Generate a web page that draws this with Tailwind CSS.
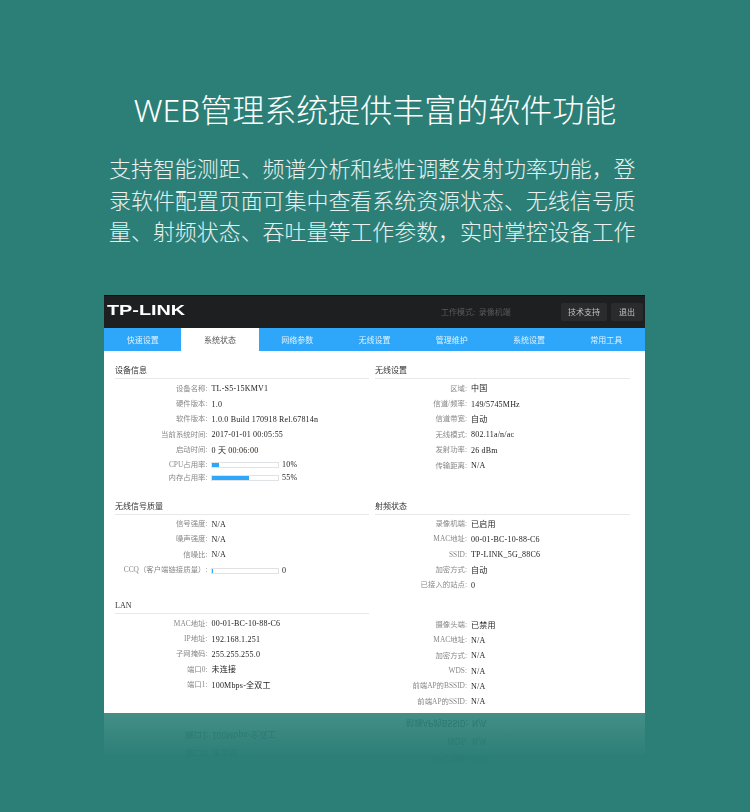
<!DOCTYPE html>
<html lang="zh-CN">
<head>
<meta charset="utf-8">
<script src="https://cdn.jsdelivr.net/npm/@tailwindcss/browser@4"></script>
</head>
<body class="m-0">
<div class="w-[750px] h-[812px] overflow-hidden bg-[#2c7f77] font-['Noto_Sans_CJK_SC','Noto_Sans',sans-serif]">
  <h1 class="pt-[88px] h-[146px] text-center text-[32px] leading-[44px] font-light text-white font-['Noto_Sans','Noto_Sans_CJK_SC',sans-serif] whitespace-nowrap">WEB管理系统提供丰富的软件功能</h1>
  <p class="ml-[109px] w-[532px] pt-[6px] h-[149px] text-[21.95px] leading-[31.7px] font-light text-white/90 whitespace-nowrap">支持智能测距、频谱分析和线性调整发射功率功能，登<br>录软件配置页面可集中查看系统资源状态、无线信号质<br>量、射频状态、吞吐量等工作参数，实时掌控设备工作</p>

  <div class="relative ml-[104px] w-[541px] h-[418px] bg-white blur-[0.35px] font-['Liberation_Serif','Noto_Sans_CJK_SC',serif] text-[8px] text-[#222]">
    <div class="flex items-center h-[33px] bg-[#1e1f21] border-t border-[#0c0c0c] pl-[3px] pr-[2px]">
      <div class="w-[334px] -mt-[5px] font-['Liberation_Sans',sans-serif] font-bold text-[15px] leading-none text-white origin-left scale-x-[1.32] whitespace-nowrap">TP-LINK</div>
      <div class="w-[120px] -mt-[1px] text-[#5a5a5a] font-['Noto_Sans_CJK_SC',sans-serif]">工作模式:&nbsp;&nbsp;录像机端</div>
      <div class="w-[46px] h-[18px] leading-[18px] text-center rounded-[2px] bg-[#2a2b2d] text-[#c4c4c4] font-['Noto_Sans_CJK_SC',sans-serif]">技术支持</div>
      <div class="ml-[4px] w-[32px] h-[18px] leading-[18px] text-center rounded-[2px] bg-[#2a2b2d] text-[#c4c4c4] font-['Noto_Sans_CJK_SC',sans-serif]">退出</div>
    </div>
    <div class="grid grid-cols-7 h-[23px] bg-[#2ea7fa] text-center leading-[23px] text-white/85 font-['Noto_Sans_CJK_SC',sans-serif]">
      <div>快速设置</div>
      <div class="bg-white text-[#555]">系统状态</div>
      <div>网络参数</div>
      <div>无线设置</div>
      <div>管理维护</div>
      <div>系统设置</div>
      <div>常用工具</div>
    </div>

    <div class="grid grid-cols-[254px_255px] gap-x-[6px] pl-[11px] pt-[11px] font-['Liberation_Serif','Noto_Sans_CJK_SC',serif] [&_span:first-child]:text-[7.4px] [&_span:first-child]:-translate-y-[1px] [&_span:last-child]:tracking-[0.2px]">
      <!-- left column -->
      <div>
        <div class="h-[17px] leading-[17px] border-b border-[#e8e8e8] text-[#333]">设备信息</div>
        <div class="mt-[2.5px] h-[116px]">
          <div class="flex h-[15.4px] items-center"><span class="w-[92.5px] text-right text-[#888] whitespace-nowrap">设备名称:</span><span class="ml-[4px] whitespace-nowrap">TL-S5-15KMV1</span></div>
          <div class="flex h-[15.4px] items-center"><span class="w-[92.5px] text-right text-[#888] whitespace-nowrap">硬件版本:</span><span class="ml-[4px] whitespace-nowrap">1.0</span></div>
          <div class="flex h-[15.4px] items-center"><span class="w-[92.5px] text-right text-[#888] whitespace-nowrap">软件版本:</span><span class="ml-[4px] whitespace-nowrap">1.0.0 Build 170918 Rel.67814n</span></div>
          <div class="flex h-[15.4px] items-center"><span class="w-[92.5px] text-right text-[#888] whitespace-nowrap">当前系统时间:</span><span class="ml-[4px] whitespace-nowrap">2017-01-01 00:05:55</span></div>
          <div class="flex h-[15.4px] items-center"><span class="w-[92.5px] text-right text-[#888] whitespace-nowrap">启动时间:</span><span class="ml-[4px] whitespace-nowrap">0 天 00:06:00</span></div>
          <div class="flex h-[14px] items-center"><span class="w-[92.5px] text-right text-[#888] whitespace-nowrap">CPU占用率:</span><div class="ml-[3.5px] w-[68px] h-[6px] border border-[#dfe3e6]"><div class="h-full w-[7px] bg-[#2ea7fa]"></div></div><span class="ml-[3px]">10%</span></div>
          <div class="flex h-[12px] items-center"><span class="w-[92.5px] text-right text-[#888] whitespace-nowrap">内存占用率:</span><div class="ml-[3.5px] w-[68px] h-[6px] border border-[#dfe3e6]"><div class="h-full w-[37px] bg-[#2ea7fa]"></div></div><span class="ml-[3px]">55%</span></div>
        </div>
        <div class="h-[17px] leading-[17px] border-b border-[#e8e8e8] text-[#333]">无线信号质量</div>
        <div class="mt-[2.5px] h-[80px]">
          <div class="flex h-[15.3px] items-center"><span class="w-[92.5px] text-right text-[#888] whitespace-nowrap">信号强度:</span><span class="ml-[4px]">N/A</span></div>
          <div class="flex h-[15.3px] items-center"><span class="w-[92.5px] text-right text-[#888] whitespace-nowrap">噪声强度:</span><span class="ml-[4px]">N/A</span></div>
          <div class="flex h-[15.3px] items-center"><span class="w-[92.5px] text-right text-[#888] whitespace-nowrap">信噪比:</span><span class="ml-[4px]">N/A</span></div>
          <div class="flex h-[15.3px] items-center"><span class="w-[92.5px] text-right text-[#888] whitespace-nowrap">CCQ（客户端链接质量）:</span><div class="ml-[3.5px] w-[68px] h-[6px] border border-[#dfe3e6]"><div class="h-full w-[1px] bg-[#2ea7fa]"></div></div><span class="ml-[3px]">0</span></div>
        </div>
        <div class="h-[17px] leading-[17px] border-b border-[#e8e8e8] text-[#333]">LAN</div>
        <div class="mt-[2.5px]">
          <div class="flex h-[15.4px] items-center"><span class="w-[92.5px] text-right text-[#888] whitespace-nowrap">MAC地址:</span><span class="ml-[4px] whitespace-nowrap">00-01-BC-10-88-C6</span></div>
          <div class="flex h-[15.4px] items-center"><span class="w-[92.5px] text-right text-[#888] whitespace-nowrap">IP地址:</span><span class="ml-[4px] whitespace-nowrap">192.168.1.251</span></div>
          <div class="flex h-[15.4px] items-center"><span class="w-[92.5px] text-right text-[#888] whitespace-nowrap">子网掩码:</span><span class="ml-[4px] whitespace-nowrap">255.255.255.0</span></div>
          <div class="flex h-[15.4px] items-center"><span class="w-[92.5px] text-right text-[#888] whitespace-nowrap">端口0:</span><span class="ml-[4px] whitespace-nowrap">未连接</span></div>
          <div class="flex h-[15.4px] items-center"><span class="w-[92.5px] text-right text-[#888] whitespace-nowrap">端口1:</span><span class="ml-[4px] whitespace-nowrap">100Mbps-全双工</span></div>
        </div>
      </div>
      <!-- right column -->
      <div>
        <div class="h-[17px] leading-[17px] border-b border-[#e8e8e8] text-[#333]">无线设置</div>
        <div class="mt-[2.5px] h-[116px]">
          <div class="flex h-[15.4px] items-center"><span class="w-[92px] text-right text-[#888] whitespace-nowrap">区域:</span><span class="ml-[4px]">中国</span></div>
          <div class="flex h-[15.4px] items-center"><span class="w-[92px] text-right text-[#888] whitespace-nowrap">信道/频率:</span><span class="ml-[4px] whitespace-nowrap">149/5745MHz</span></div>
          <div class="flex h-[15.4px] items-center"><span class="w-[92px] text-right text-[#888] whitespace-nowrap">信道带宽:</span><span class="ml-[4px]">自动</span></div>
          <div class="flex h-[15.4px] items-center"><span class="w-[92px] text-right text-[#888] whitespace-nowrap">无线模式:</span><span class="ml-[4px] whitespace-nowrap">802.11a/n/ac</span></div>
          <div class="flex h-[15.4px] items-center"><span class="w-[92px] text-right text-[#888] whitespace-nowrap">发射功率:</span><span class="ml-[4px] whitespace-nowrap">26 dBm</span></div>
          <div class="flex h-[15.4px] items-center"><span class="w-[92px] text-right text-[#888] whitespace-nowrap">传输距离:</span><span class="ml-[4px]">N/A</span></div>
        </div>
        <div class="h-[17px] leading-[17px] border-b border-[#e8e8e8] text-[#333]">射频状态</div>
        <div class="mt-[2.5px] h-[101px]">
          <div class="flex h-[15.3px] items-center"><span class="w-[92px] text-right text-[#888] whitespace-nowrap">录像机端:</span><span class="ml-[4px]">已启用</span></div>
          <div class="flex h-[15.3px] items-center"><span class="w-[92px] text-right text-[#888] whitespace-nowrap">MAC地址:</span><span class="ml-[4px] whitespace-nowrap">00-01-BC-10-88-C6</span></div>
          <div class="flex h-[15.3px] items-center"><span class="w-[92px] text-right text-[#888] whitespace-nowrap">SSID:</span><span class="ml-[4px] whitespace-nowrap">TP-LINK_5G_88C6</span></div>
          <div class="flex h-[15.3px] items-center"><span class="w-[92px] text-right text-[#888] whitespace-nowrap">加密方式:</span><span class="ml-[4px]">自动</span></div>
          <div class="flex h-[15.3px] items-center"><span class="w-[92px] text-right text-[#888] whitespace-nowrap">已接入的站点:</span><span class="ml-[4px]">0</span></div>
        </div>
        <div>
          <div class="flex h-[15.3px] items-center"><span class="w-[92px] text-right text-[#888] whitespace-nowrap">摄像头端:</span><span class="ml-[4px]">已禁用</span></div>
          <div class="flex h-[15.3px] items-center"><span class="w-[92px] text-right text-[#888] whitespace-nowrap">MAC地址:</span><span class="ml-[4px]">N/A</span></div>
          <div class="flex h-[15.3px] items-center"><span class="w-[92px] text-right text-[#888] whitespace-nowrap">加密方式:</span><span class="ml-[4px]">N/A</span></div>
          <div class="flex h-[15.3px] items-center"><span class="w-[92px] text-right text-[#888] whitespace-nowrap">WDS:</span><span class="ml-[4px]">N/A</span></div>
          <div class="flex h-[15.3px] items-center"><span class="w-[92px] text-right text-[#888] whitespace-nowrap">前端AP的BSSID:</span><span class="ml-[4px]">N/A</span></div>
          <div class="flex h-[15.3px] items-center"><span class="w-[92px] text-right text-[#888] whitespace-nowrap">前端AP的SSID:</span><span class="ml-[4px]">N/A</span></div>
        </div>
      </div>
    </div>
  </div>

  <!-- reflection -->
  <div class="ml-[104px] w-[541px] h-[56px] overflow-hidden bg-gradient-to-b from-[#438f87] to-[#2c7f77] to-77% blur-[0.3px]">
    <div class="flex -scale-y-100 h-full text-[8.5px] font-['Noto_Sans_CJK_SC','Noto_Sans',sans-serif]">
      <div class="w-[250px] pt-[7px] text-[#1f6c65]">
        <div class="flex h-[17.4px] items-center opacity-20"><span class="w-[105px] text-right">端口0:</span><span class="ml-[3px]">未连接</span></div>
        <div class="flex h-[17.4px] items-center opacity-45"><span class="w-[105px] text-right">端口1:</span><span class="ml-[3px] whitespace-nowrap">100Mbps-全双工</span></div>
      </div>
      <div class="w-[291px] text-[#1f6c65]">
        <div class="flex h-[18px] items-center opacity-15"><span class="w-[114px] text-right">MAC地址:</span><span class="ml-[4px]">N/A</span></div>
        <div class="flex h-[18px] items-center opacity-35"><span class="w-[114px] text-right">WDS:</span><span class="ml-[4px]">N/A</span></div>
        <div class="flex h-[18px] items-center opacity-60"><span class="w-[114px] text-right whitespace-nowrap">前端AP的BSSID:</span><span class="ml-[4px]">N/A</span></div>
      </div>
    </div>
  </div>
</div>
</body>
</html>
